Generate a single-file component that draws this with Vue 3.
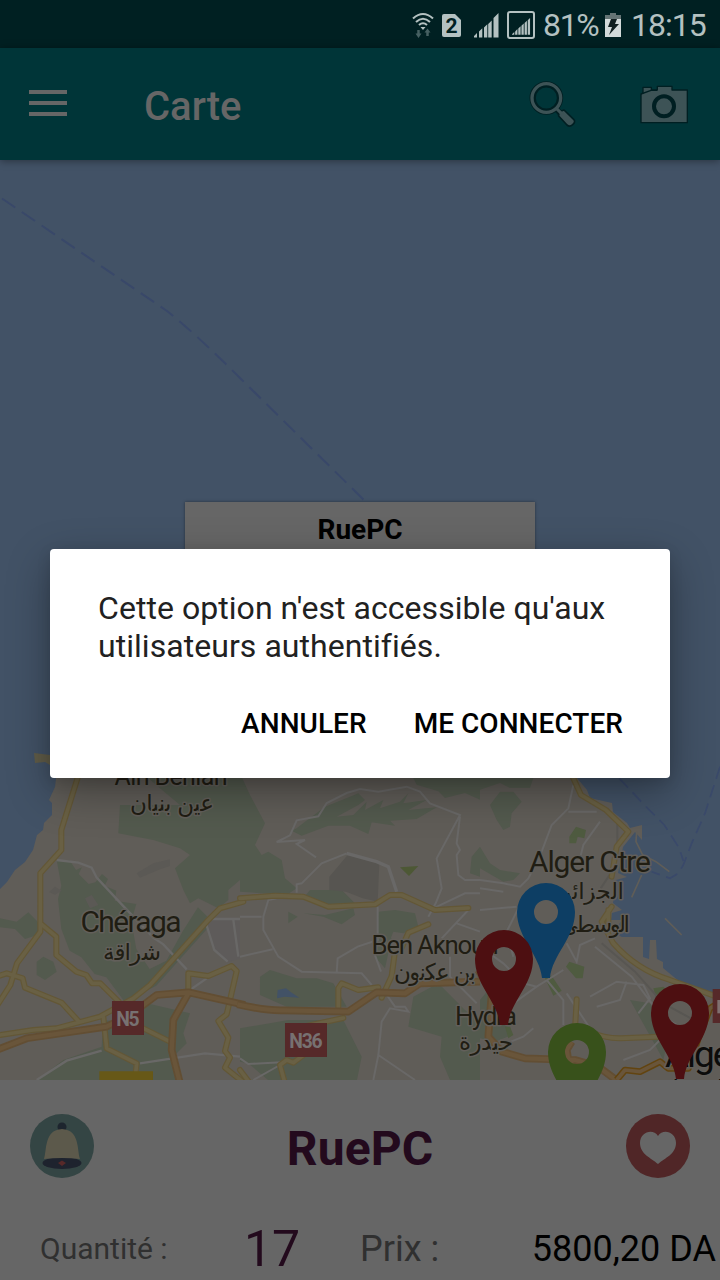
<script setup>
const pins = [
  { x: 546, y: 883, color: '#0d3e64' },
  { x: 504, y: 930, color: '#4d0f11' },
  { x: 577, y: 1023, color: '#38511b' },
  { x: 680, y: 984, color: '#4d0f11' },
]
const bars = [0, 1, 2, 3, 4, 5]

const westRoads = 'M234 110l-50 160v60l-63 70v175l-70 95-20 65-45 70M121 550l48 40v55l60 50 30 10 17 25h25l55 55M-10 710l30-10 48 15 7 28 110 45 50 55M0 885l100-15 70-5 130-35 100-55 50-40 170-190 40-40 70-20M565 750v-50l60 8 70-30 15 15-30 130-25 20 30 50-10 40 15 20-15 30 50 40M310 830l10 95 90 45-5 50M430 865l80 40'
const westHighway = 'M-10 930l90-35 240-35 70-35 80-60 95-8 170 38M565 760l-45 80-5 90 25 100'
const midRoads = 'M0 415l105-8 85 3 75 30 140-7 45-28 35 0 100 45 100-6M565 493l-60 25-20 45-20 10-10 75-30 65M295 750v-65l10-15 50 20 60-8M190 800l120-26M135 970l-15-55 20-15 20 8 40-30M0 930l30 40'
const midHighway = 'M-8 733q90 20 138 18l195 4 85-58 85 3 45-30 180-5'
const eastRoads = 'M278 50l25 55 75 45 67 65-35 45-15 90M395 440l-30 45 35 65q70 80 170 110l155 55M290 718l-5 90M385 450v60M330 815q40 20 90 20l120-5'
const eastHighway = 'M-5 630l40 70-10 130 40 45 70 20 150 5 70 20 60 45M290 930l-25-30-5-30 15-25'
const expressway = 'M410 960l25-30 45 5 60-30 25 20 60 0 30-90 35-90 40-25'
</script>

<template>
  <div class="screen">
    <div class="status">
      <svg class="wifi" viewBox="0 0 22 27" width="22" height="27">
        <g fill="none" stroke="#b4c1c1" stroke-width="2.1">
          <path d="M1 6.500Q11-2.500 21 6.500M4 10Q11 3.500 18 10M7 13Q11 9.500 15 13" />
        </g>
        <path d="M8.500 15h5L11 18z" fill="#b4c1c1" />
        <path d="M6.500 18v5M15.500 24v-5" stroke="#466062" stroke-width="2.500" />
        <path d="M3.500 21.500h6l-3 4.500zM12.500 20.500h6l-3-4z" fill="#466062" />
      </svg>
      <svg class="sim" viewBox="0 0 19 25" width="19" height="25">
        <path d="M2 1h11l6 6v15q0 2-2 2H2q-2 0-2-2V3q0-2 2-2z" fill="#b4c1c1" />
        <text x="9.500" y="19.800" text-anchor="middle" font-size="21" font-weight="700" fill="#002022">2</text>
      </svg>
      <svg class="sig" viewBox="0 0 25 25" width="25" height="25">
        <path d="M0 24.500v-1.500l3-3v4.500zM5 24.500v-6l3.300-3.300v9.300zM10 24.500v-10l3.300-3.300v13.300zM14.200 24.500V11l3.500-3.500v17zM19.500 24.500V5l5-5v24.500z" fill="#b4c1c1" />
      </svg>
      <svg class="sig2" viewBox="0 0 28 28" width="28" height="28">
        <rect x="1" y="1" width="26" height="26" rx="2" fill="none" stroke="#b4c1c1" stroke-width="2" />
        <path v-for="b in bars" :key="b" :d="`M${5 + b * 3.15} 23.700v-${0.5 + b * 2.8}l2.300-2.300v${2.800 + b * 2.8}z`" fill="#b4c1c1" />
      </svg>
      <span class="pct">81%</span>
      <svg class="batt" viewBox="0 0 16 25" width="16" height="25">
        <path d="M5 0h6v2h5v4H0V2h5z" fill="#657475" />
        <path d="M0 6h16v18H0z" fill="#d3dada" />
        <path d="M6 6h6l-2 5h4L4 22l3-8H3z" fill="#111f20" />
      </svg>
      <span class="clock">18:15</span>
    </div>

    <header class="bar">
      <svg class="menu" viewBox="0 0 38 26" width="38" height="26"><path d="M0 2h38M0 13h38M0 24h38" stroke="#666" stroke-width="4" /></svg>
      <h1>Carte</h1>
      <svg class="search" viewBox="86 60 144 150" width="48" height="50">
        <circle cx="138" cy="114" r="41" fill="none" stroke="#001f22" stroke-width="19" />
        <path d="M164 143l18 19" stroke="#001f22" stroke-width="17" />
        <path d="M176 155l15-5 29 28q7 7-3 16-9 8-17 1l-25-27z" fill="#3d5356" stroke="#001f22" stroke-width="5" stroke-linejoin="round" />
        <circle cx="138" cy="114" r="43" fill="none" stroke="#3d5356" stroke-width="10" />
        <path d="M166 143l20 20" stroke="#3d5356" stroke-width="9" />
      </svg>
      <svg class="camera" viewBox="417 68 150 120" width="50" height="40">
        <path d="M423 98l6-3V78h25v8h18V75h44v11h46v98H423z" fill="#3d5356" stroke="#001f22" stroke-width="4" stroke-linejoin="round" />
        <path d="M423 98l30-11h18" fill="none" stroke="#001f22" stroke-width="4" />
        <circle cx="492" cy="135" r="30" fill="#3d5356" stroke="#001f22" stroke-width="12" />
      </svg>
    </header>

    <main class="map">
      <svg class="tiles" viewBox="0 160 720 920" width="720" height="920">
        <rect y="160" width="720" height="920" fill="#425266" />
        <path d="M2 198.500L167 311Q196 334 240 378L366 502" fill="none" stroke="#394869" stroke-width="2" stroke-dasharray="16 8" />
        <path d="M0 889L7 882 15 870 25 862 33 850 37 835 43 830 44 823 52 815 52 803 49 800 55 787 57 770 200 740 560 740 577 778 587 790 590 798 612 803 613 812 627 823 630 828 642 825 642 840 635 832 623 847 618 873 627 877 616 880 613 903 622 910 612 913 611 920 622 920 613 933 622 937 643 937 643 957 649 959 650 940 656 940 657 959 663 962 663 968 680 982 697 990 720 1000V1080H0z" fill="#605d58" />
        <path d="M34 753l16 2v10l-5-3-10 1z" fill="#605c48" />

        <!-- western districts -->
        <g transform="translate(0 740) scale(.33333)">
          <g fill="#535a4e">
            <path d="M440 110l40 35 60 50h-180l-5 85 105 20 80 25 30 20-45 40 25 65 20 40 25-15 60 30 30-25v-30l35-30V110z" />
            <path d="M170 360h38l20 30 18-8-10 20 30 30 20-5 20-25 18 15-10 20 35 15-5 30 65 10-15 50 15 85 40 60 50-25 50-90 45-70 45 45-170 190-60 30-30 25-60-80-35-10-40-50-35-20-25-65-10-90 10-40z" />
            <path d="M0 535l50 10 35-28 40 40-20 30-30 10-30-30-45-5zM110 665l20-15 30 15 10 30-35 25-25-15z" />
            <path d="M440 790l130 30-20 60 10 30-35 35 20 75H110l80-60 115-40 5-80 100 10z" />
          </g>
          <path d="M410 400l50-30 50-12v20l-30 10-60 25zM165 440l20 12-20 12-18-8zM255 475l20-10 20 30-25 10z" fill="#5b5955" />
          <path d="M618 537h102v120l-40 10-35-35z" fill="#5e5b5a" />
          <g fill="none" stroke="#696867" stroke-width="7">
            <path d="M170 360l65 8 40 15 15 30 75 80 95 100 30 20 70 75M620 537h100M618 550l25 80 40 35M700 540l15 110M570 750l50-35M110 1020l90-58 105-30M420 970l195-30 105 10" />
          </g>
          <path :d="westRoads" class="road-edge" />
          <path :d="westRoads" class="road" />
          <path :d="westHighway" class="highway-edge" />
          <path :d="westHighway" class="highway" />
          <path d="M298 994h161v26H298z" fill="#675817" />
          <path d="M336 783h96v102h-96z" fill="#562929" />
          <text x="384" y="857" class="shield" textLength="70">N5</text>
        </g>

        <!-- central districts -->
        <g transform="translate(240 760) scale(.33333)">
          <g fill="#535a4e">
            <path d="M0 40l30 65 45 85-30 65 20 30 20-10 40 25 10 55 35 30-30 20-140-10z" />
            <path d="M170 205l25-20 60-45 75-30 25-10 20 20-20 15-65 35 50-5 40-40-5 25 55-30-10 25 60-20 25-25-15 30 70-10-55 30 85-8-60 35-80 5 15 15-70-10-10 35-55-25-65 0-80 30-30-15z" />
            <path d="M520 54h200v65l-45-20-60 15-20-20-65-20zM210 390l95 0 40 40-80 10-75-25zM145 455l28 15-28 20zM190 460l65 5 85-20 5 20-40 28-55-23zM415 455l50-5 60 10 10 40-45 20-30-5-10 25-40 0zM415 540l40-5-20 90-30-35zM60 650l30-20 80 25 60 0 50 15 40 70H140L60 705zM0 805l145-25 165 0 55 110-15 75H90l-65-55-25-5zM520 710l75-40 80 80 45 35v175h-90l-30-70 5-60-100-30zM695 290l25-30v90l-30-10z" />
          </g>
          <path d="M268 350l55-65 95 25-5 115-45-10-50-20-50-5z" fill="#575551" />
          <path d="M480 322l55-4-28 30z" fill="#4d5835" />
          <path d="M113 690l25-5 15 12 25 16-45-3-22 5z" fill="#425266" />
          <g fill="none" stroke="#696867" stroke-width="6">
            <path d="M228 292l-58-40 25-12-85 6 40-20 20-45 65-12 25-40 60-30 40-12 55 8 85-15 40 15 30 35 90 35-70 130 15 90-18 45-22 40M170 398v-25l15-3 60-60 75-30M110 415l-25 5-15 50v40l45 80 70 45 180 5 30 35M0 590l98-22M0 470h65M413 440v100l-60 20-60 35-3 43M413 530l-10 50 20 55M430 690l35 50 30 0 10 15-55-10-25 40-10 100-15 75M415 885l110 75M580 445l95-45h45M685 450l-80 85M660 170l-10 80 10 20-10 15 5 60 20 15h45M0 895l25 17 100-5M120 915l-80 45M630 590v60l80 80M650 490l70 25" />
            <path d="M320 280l90 25 35 15 25 75" stroke-width="10" />
          </g>
          <path :d="midRoads" class="road-edge" />
          <path :d="midRoads" class="road" />
          <path :d="midHighway" class="highway-edge" />
          <path :d="midHighway" class="highway" />
          <path d="M135 789h126v102H135z" fill="#562929" />
          <text x="198" y="863" class="shield" textLength="100">N36</text>
        </g>

        <!-- eastern districts and harbour -->
        <g transform="translate(480 760) scale(.33333)">
          <g fill="#535a4e">
            <path d="M0 54h160l-10 30-60 0-30-15-60 20zM60 95l40 0 25 30-30 35-5 40-20 10-20-30-20-45zM0 260l30 50 30 20 60 10-20 20-30 5-70-40zM0 720l25-30 50 25 20 110-50 20-45-10zM450 720l60 10 60 80-20 90-30-55z" />
          </g>
          <path d="M268 230l20-30 30 10-5 25-20-5-5 20-20 0zM258 620l10-15 45 15-5 35-20 0zM195 655l20-8 30 45-25 15zM520 685l30-5 40 35-60 5zM75 800l15 0 10 25-15 10z" fill="#4f5b40" />
          <g fill="none" stroke-width="5">
            <path d="M470 215l-2 30 20 40 40 20 40 30M485 345l-30 67M555 475l50 50" stroke="#5f5d58" />
            <path d="M418 55l75 80 60 60 45 70 12 38M720 20l-45 140-40 90-25 65-15 25-25 15-55-20" stroke="#3a496a" stroke-dasharray="38 20" />
          </g>
          <g fill="none" stroke="#696867" stroke-width="6">
            <path d="M280 75l-15 70-50 50-30 80-40 80-25 25-50-10-70-10M265 155l85 0M360 185l-50 70-15 60M0 450l110-10M130 415l-50 100 20 75M0 560l70 50 60 60 40 10 80-50M260 550l30 55 10-50 45-20M200 660l50 60v75M345 560l110 90 90 120 110 60M170 680l-70 50M350 740l70-20 20-55M330 710l80-45 80 10 20 40-35 45M430 900l80-30 60-60M260 700l80 120M80 850l50-20 30-25M0 385l70 10" />
            <path d="M365 550l100 85 85 95 110 60M412 185v75l-20 80-30 45" stroke="#585652" />
          </g>
          <path :d="eastRoads" class="road-edge" />
          <path :d="eastRoads" class="road" />
          <path :d="eastHighway" class="highway-edge" />
          <path :d="eastHighway" class="highway" />
          <path :d="expressway" class="express-edge" />
          <path :d="expressway" class="highway slim" />
          <path d="M698 687h22v102h-22z" fill="#562929" /><path d="M712 720h8v40h-8z" fill="#807070" />
        </g>

        <g class="places">
          <text x="171" y="785" textLength="113" font-size="25">Aïn Benian</text>
          <text x="172" y="811" textLength="84" class="ar">عين بنيان</text>
          <text x="131" y="932" textLength="101" font-size="30">Chéraga</text>
          <text x="132" y="960" textLength="58" class="ar">شراقة</text>
          <text x="435" y="954" textLength="127" font-size="26">Ben Aknoun</text>
          <text x="435" y="980" textLength="82" class="ar">بن عكنون</text>
          <text x="486" y="1025" textLength="62" font-size="26">Hydra</text>
          <text x="486" y="1050" textLength="54" class="ar">حيدرة</text>
          <text x="590" y="872" textLength="122" font-size="30">Alger Ctre</text>
          <text x="592" y="899" textLength="64" class="ar">الجزائر</text>
          <text x="595" y="932" textLength="70" class="ar">الوسطى</text>
          <text x="704" y="1067" textLength="78" font-size="37" class="city">Alger</text>
          <text x="690" y="1096" textLength="86" class="ar city">الجزائر</text>
        </g>

        <g v-for="p in pins" :key="p.x" :transform="`translate(${p.x} ${p.y})`">
          <path d="M-4 95C-6 72-29 55-29 29A29 29 0 0 1 29 29C29 55 6 72 4 95zM0 17A12 12 0 1 0 0 41A12 12 0 1 0 0 17z" fill-rule="evenodd" :fill="p.color" />
        </g>
      </svg>
      <div class="callout">RuePC</div>
    </main>

    <section class="sheet">
      <div class="title-row">
        <svg viewBox="0 0 64 64" width="64" height="64">
          <circle cx="32" cy="32" r="32" fill="#344544" />
          <circle cx="32" cy="13" r="4.500" fill="#1d252e" />
          <ellipse cx="32" cy="49" rx="19.500" ry="6" fill="#1e232e" />
          <path d="M14 45C17 36 14 16 32 15C50 16 47 36 50 45Q32 43 14 45z" fill="#5c594b" />
          <path d="M28 49l4-2.500 4 2.500-4 3z" fill="#572929" />
        </svg>
        <h2>RuePC</h2>
        <svg viewBox="0 0 64 64" width="64" height="64">
          <circle cx="32" cy="32" r="32" fill="#502627" />
          <path d="M32 50C25 44 14 40 14 29C14 18 27 14 32 22C37 14 50 18 50 29C50 40 39 44 32 50z" fill="#666" />
        </svg>
      </div>
      <div class="info-row">
        <span class="qty-label">Quantité :</span>
        <span class="qty">17</span>
        <span class="price-label">Prix :</span>
        <span class="price">5800,20 DA</span>
      </div>
    </section>

    <div class="dialog" role="dialog">
      <p>Cette option n'est accessible qu'aux utilisateurs authentifiés.</p>
      <div class="actions">
        <button>ANNULER</button>
        <button>ME CONNECTER</button>
      </div>
    </div>
  </div>
</template>

<style>
body { background: #666; }
</style>

<style scoped>
.screen { position: relative; width: 720px; height: 1280px; overflow: hidden; display: flex; flex-direction: column; font-family: Roboto, "DejaVu Sans", sans-serif; background: #666; }
.status { box-sizing: border-box; height: 48px; flex: none; display: flex; align-items: center; justify-content: flex-end; padding: 2px 14px 0 0; background: #002022; color: #b4c1c1; font-size: 32px; line-height: 46px; }
.sim { margin-left: 8px; }
.sig { margin-left: 13px; }
.sig2 { margin-left: 8px; }
.pct { margin-left: 8px; width: 56px; white-space: nowrap; letter-spacing: -1.3px; }
.batt { margin-left: 6px; }
.clock { margin-left: 10px; width: 75px; letter-spacing: -1px; }
.bar { position: relative; z-index: 1; height: 112px; flex: none; display: flex; align-items: center; box-sizing: border-box; padding: 0 31px 0 29px; background: #003538; box-shadow: 0 1px 8px rgba(0, 0, 0, .4); }
.menu { margin-top: -2px; }
h1 { margin: 6px auto 0 77px; font-size: 40px; font-weight: 500; line-height: 48px; color: #666; }
.search { margin: 2px 62px 0 0; }
.camera { margin-top: -1px; }
.map { position: relative; height: 920px; flex: none; overflow: hidden; }
.tiles { display: block; }
.road-edge, .road, .highway-edge, .highway, .express-edge { fill: none; stroke-linejoin: round; }
.road-edge { stroke: #635736; stroke-width: 18; stroke-linecap: round; }
.road { stroke: #696044; stroke-width: 11; stroke-linecap: round; }
.highway-edge { stroke: #624e33; stroke-width: 23; }
.highway { stroke: #69553a; stroke-width: 13; }
.express-edge { stroke: #624410; stroke-width: 20; }
.slim { stroke-width: 11; }
.callout { position: absolute; left: 185px; top: 342px; width: 350px; height: 80px; background: #666; box-shadow: 0 0 3px rgba(0, 0, 0, .4); color: #000; font-size: 28px; font-weight: 700; line-height: 55px; text-align: center; }
.shield { font-size: 58px; font-weight: 700; fill: #777171; text-anchor: middle; }
.places text { text-anchor: middle; fill: #201d13; paint-order: stroke; stroke: #625f5a; stroke-width: 3px; stroke-linejoin: round; }
.places .ar { font-size: 23px; font-family: "DejaVu Sans", sans-serif; direction: rtl; }
.places .city { fill: #0c0c0b; }
.sheet { flex: 1; background: #666; }
.title-row { display: flex; align-items: center; justify-content: space-between; padding: 34px 30px 0; }
.title-row svg { display: block; }
h2 { margin: 5px 0 0; font-size: 48px; line-height: 56px; height: 56px; font-weight: 700; color: #230a1d; letter-spacing: .1px; }
.info-row { display: grid; grid-template-columns: 204px 116px 1fr auto; align-items: center; height: 60px; padding: 41px 4px 0 40px; line-height: 60px; white-space: nowrap; }
.qty-label { font-size: 30px; color: #303030; }
.qty { font-size: 50px; color: #230a1d; }
.price-label { font-size: 36px; color: #303030; }
.price { font-size: 36px; color: #000; }
.dialog { position: absolute; z-index: 2; left: 50px; top: 549px; width: 620px; height: 229px; box-sizing: border-box; padding: 40px 40px 0 48px; border-radius: 4px; background: #fff; box-shadow: 0 14px 44px rgba(0, 0, 0, .32), 0 4px 14px rgba(0, 0, 0, .12); }
.dialog p { margin: 0; font-size: 32px; line-height: 38px; color: #212121; letter-spacing: .05px; font-variant-ligatures: common-ligatures; }
.actions { display: flex; justify-content: flex-end; gap: 32px; margin-top: 37px; }
button { border: 0; padding: 0 7px 0 8px; background: none; font: 500 28px/44px Roboto, sans-serif; color: #000; letter-spacing: .05px; }
</style>
